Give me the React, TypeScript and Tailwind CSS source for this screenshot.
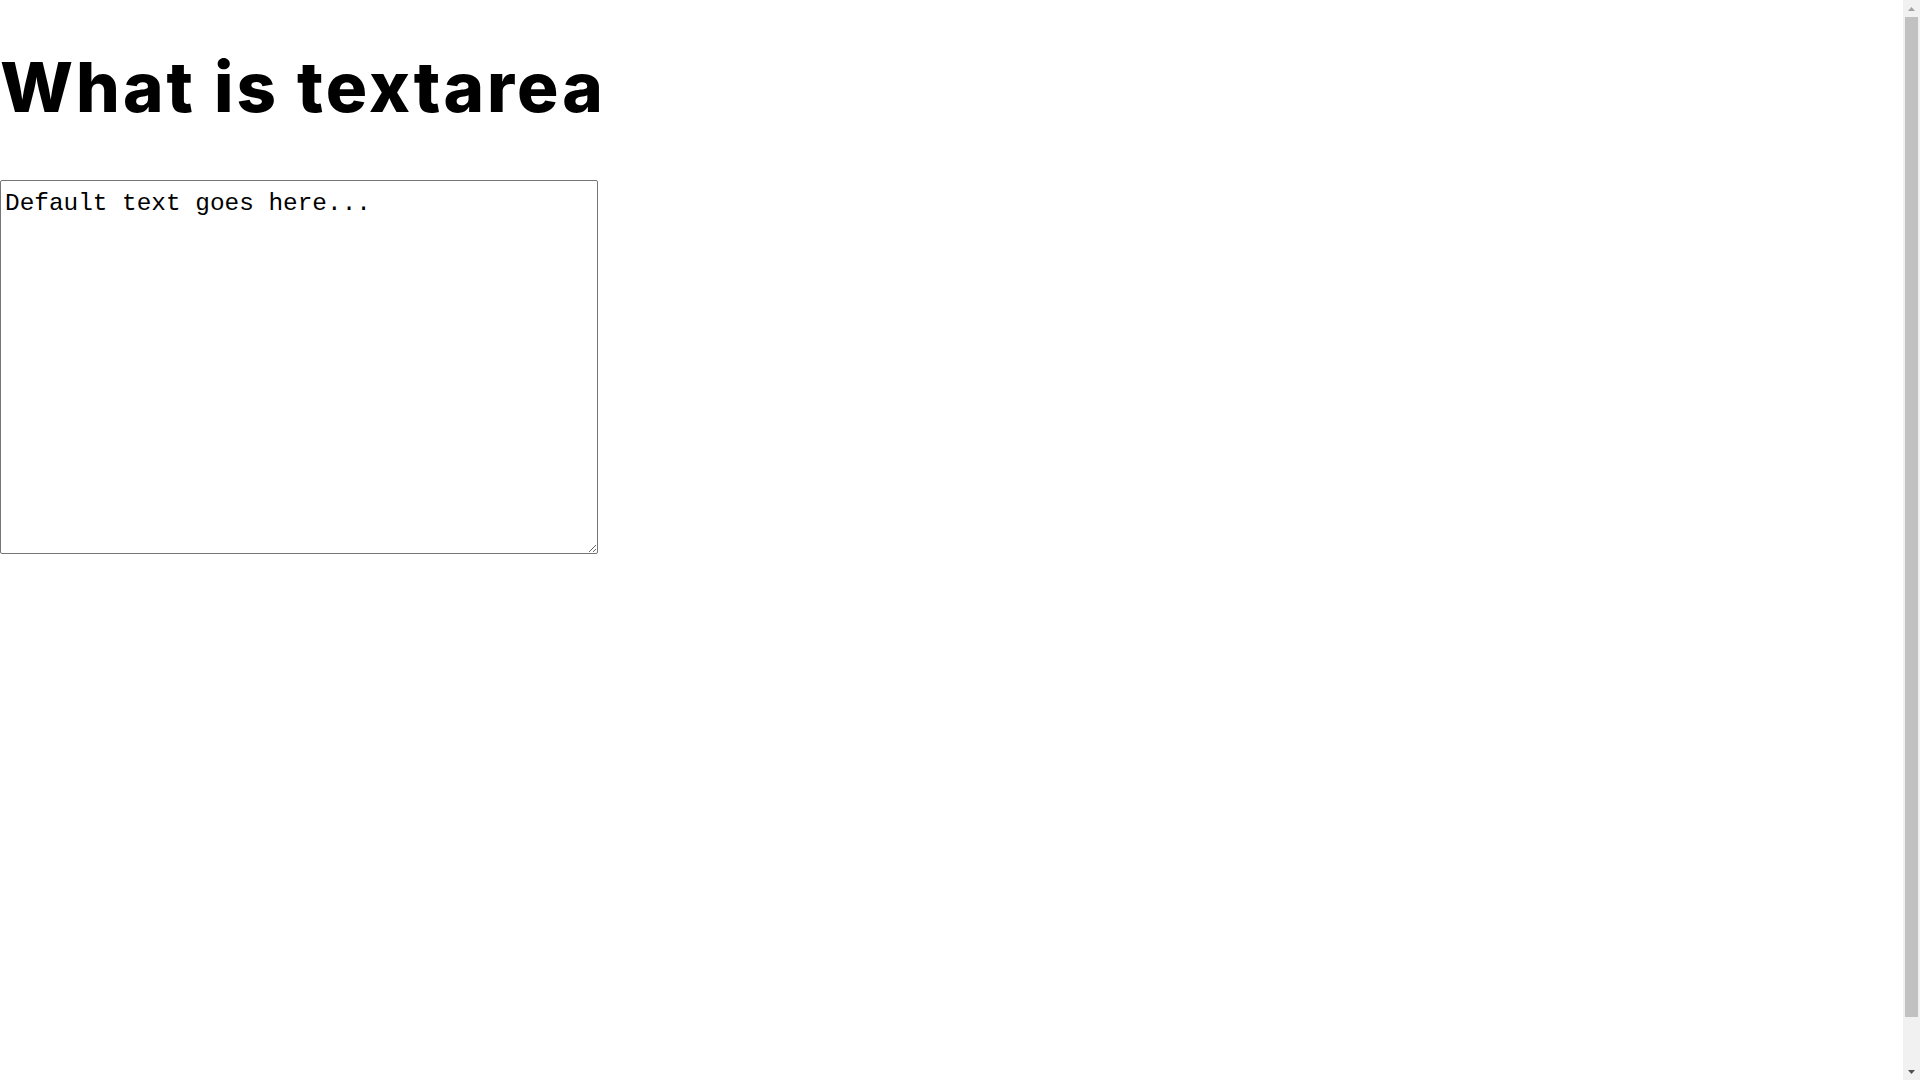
export default function App() {
  return (
    <div className="flex h-screen bg-white text-black overflow-hidden">
      <div className="flex-1">
        {/* Heading */}
        <h1 className="pt-[53px] text-[69px] leading-none font-extrabold tracking-[3px] font-['Inter',sans-serif]">
          What is textarea
        </h1>

        {/* Textarea */}
        <div className="mt-[58px]">
          <textarea
            defaultValue="Default text goes here..."
            className="block w-[598px] h-[374px] border border-[#767676] rounded-[2px] pt-[5px] pl-1 text-[24.4px] text-black font-['Liberation_Mono',monospace] outline-none"
          />
        </div>
      </div>

      {/* Page scrollbar */}
      <div className="w-[17px] h-full bg-[#f1f1f1] flex flex-col items-center">
        <div className="h-[17px] flex items-center justify-center">
          <svg width="7" height="4" viewBox="0 0 7 4">
            <path d="M3.5 0 L7 4 L0 4 Z" fill="#a3a3a3" />
          </svg>
        </div>
        <div className="w-[13px] h-[1000px] bg-[#c1c1c1]" />
        <div className="flex-1" />
        <div className="h-[17px] flex items-center justify-center">
          <svg width="7" height="4" viewBox="0 0 7 4">
            <path d="M0 0 L7 0 L3.5 4 Z" fill="#505050" />
          </svg>
        </div>
      </div>
    </div>
  );
}
